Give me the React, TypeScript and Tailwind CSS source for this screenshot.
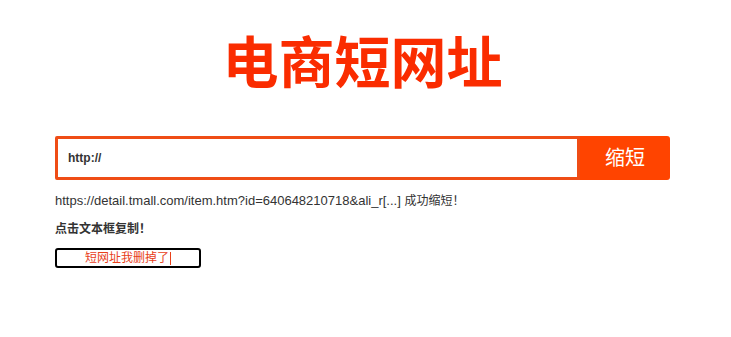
import { useState } from 'react';

export default function App() {
  const [url, setUrl] = useState('http://');

  return (
    <div className="min-h-[337px] bg-white font-['Liberation_Sans','Noto_Sans_CJK_SC',sans-serif] text-[#333]">
      <div className="ml-[55px] w-[615px] pt-[33px]">
        {/* Title */}
        <h1 className="text-center text-[56px] leading-[62px] font-bold text-[#fa2c00]">
          电商短网址
        </h1>

        {/* Input row */}
        <div className="mt-[41px] flex h-[44px]">
          <input
            value={url}
            onChange={(e) => setUrl(e.target.value)}
            className="h-full flex-1 rounded-l-[2px] border-[3px] border-[#ef4d16] px-[10px] text-[12px] font-bold text-[#333] outline-none"
          />
          <button className="h-full w-[90px] rounded-r-[3px] bg-[#ff4400] text-[20px] text-white">
            缩短
          </button>
        </div>

        {/* Result */}
        <p className="mt-[14px] text-[13px] leading-[14px]">
          https://detail.tmall.com/item.htm?id=640648210718&amp;ali_r[...] <span className="text-[12px]">成功缩短！</span>
        </p>
        <p className="mt-[14px] text-[12px] leading-[14px] font-bold">点击文本框复制！</p>

        <div className="mt-[12px] flex h-[20px] w-[146px] items-center justify-center rounded-[3px] border-2 border-black">
          <span className="text-[12px] leading-[14px] text-[#e8401a]">短网址我删掉了</span>
          <span className="ml-[1px] h-[13px] w-px bg-[#e8401a]" />
        </div>
      </div>
    </div>
  );
}
